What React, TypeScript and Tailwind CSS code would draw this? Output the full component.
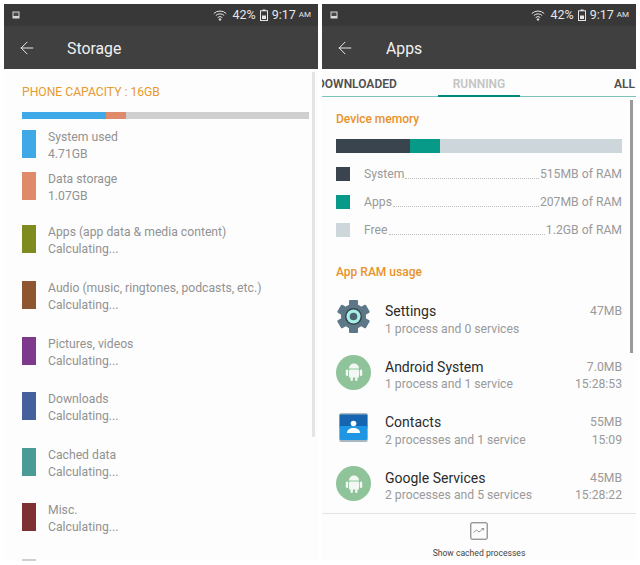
import { ArrowLeft } from "lucide-react";

const storageRows = [
  { name: "System used", value: "4.71GB", color: "bg-[#3fa9e8]", gap: "mt-0" },
  { name: "Data storage", value: "1.07GB", color: "bg-[#e08a6c]", gap: "mt-[14px]" },
  { name: "Apps (app data & media content)", value: "Calculating...", color: "bg-[#7f8a1f]", gap: "mt-[25px]" },
  { name: "Audio (music, ringtones, podcasts, etc.)", value: "Calculating...", color: "bg-[#8f5430]", gap: "mt-[28px]" },
  { name: "Pictures, videos", value: "Calculating...", color: "bg-[#7d3a8c]", gap: "mt-[28px]" },
  { name: "Downloads", value: "Calculating...", color: "bg-[#45609c]", gap: "mt-[27px]" },
  { name: "Cached data", value: "Calculating...", color: "bg-[#4a9a96]", gap: "mt-[28px]" },
  { name: "Misc.", value: "Calculating...", color: "bg-[#7f3033]", gap: "mt-[27px]" },
];

const memoryRows = [
  { name: "System", value: "515MB of RAM", color: "bg-[#3a444e]" },
  { name: "Apps", value: "207MB of RAM", color: "bg-[#079a89]" },
  { name: "Free", value: "1.2GB of RAM", color: "bg-[#cdd6db]" },
];

function AndroidIcon() {
  return (
    <div className="flex h-[35px] w-[35px] items-center justify-center rounded-full bg-[#8fc49a]">
      <svg width="20" height="22" viewBox="0 0 20 22" fill="#f4f8f4">
        <path d="M5 7.500a5 5 0 0 1 10 0z" />
        <rect x="5" y="8.500" width="10" height="8" rx="1" />
        <rect x="1.800" y="8.500" width="2.400" height="6.500" rx="1.200" />
        <rect x="15.800" y="8.500" width="2.400" height="6.500" rx="1.200" />
        <rect x="6.500" y="15" width="2.400" height="5" rx="1.200" />
        <rect x="11.100" y="15" width="2.400" height="5" rx="1.200" />
      </svg>
    </div>
  );
}

function SettingsIcon() {
  return (
    <svg width="35" height="35" viewBox="0 0 35 35">
      <g fill="#5d7787">
        <circle cx="17.500" cy="17.500" r="12.500" />
        {[0, 60, 120, 180, 240, 300].map((a) => (
          <rect key={a} x="13" y="1" width="9" height="8" rx="1" transform={`rotate(${a} 17.500 17.500)`} />
        ))}
      </g>
      <circle cx="17.500" cy="17.500" r="8.500" fill="#37474f" />
      <circle cx="17.500" cy="17.500" r="7" fill="#a8efe6" />
      <circle cx="17.500" cy="17.500" r="3.800" fill="#4c6572" />
    </svg>
  );
}

function ContactsIcon() {
  return (
    <svg width="35" height="35" viewBox="0 0 35 35">
      <rect x="3.500" y="3" width="28" height="29" rx="1.500" fill="#a9b8c0" />
      <rect x="3.500" y="4.500" width="28" height="13" fill="#1565b0" />
      <rect x="3.500" y="16" width="28" height="14" rx="1" fill="#1e96e4" />
      <circle cx="17.500" cy="13.500" r="2.800" fill="#fff" />
      <path d="M11 23c0-3.500 3-5 6.500-5s6.500 1.500 6.500 5z" fill="#fff" />
    </svg>
  );
}

const apps = [
  { name: "Settings", sub: "1 process and 0 services", size: "47MB", time: "", icon: <SettingsIcon /> },
  { name: "Android System", sub: "1 process and 1 service", size: "7.0MB", time: "15:28:53", icon: <AndroidIcon /> },
  { name: "Contacts", sub: "2 processes and 1 service", size: "55MB", time: "15:09", icon: <ContactsIcon /> },
  { name: "Google Services", sub: "2 processes and 5 services", size: "45MB", time: "15:28:22", icon: <AndroidIcon /> },
];

function StatusBar() {
  return (
    <div className="flex h-[22px] items-center justify-between bg-[#383838] pl-[8px] pr-[7px] text-[#e6e6e6]">
      <svg width="8" height="8" viewBox="0 0 8 8">
        <rect x="0.500" y="0.500" width="7" height="7" fill="#d8d8d8" />
        <rect x="1.500" y="1.500" width="5" height="3.500" fill="#484848" />
      </svg>
      <div className="flex items-center text-[12.500px] leading-none">
        <svg width="14" height="11" viewBox="0 0 14 11" fill="none" stroke="#e6e6e6" strokeWidth="1" className="mr-[5px]">
          <path d="M0.800 3.500a9 9 0 0 1 12.400 0" />
          <path d="M2.800 5.500a6.200 6.200 0 0 1 8.400 0" />
          <path d="M4.700 7.500a3.500 3.500 0 0 1 4.600 0" />
          <circle cx="7" cy="9.500" r="0.800" fill="#e6e6e6" />
        </svg>
        <span>42%</span>
        <svg width="8" height="12" viewBox="0 0 8 12" className="mx-[4px]">
          <rect x="2.500" y="0.500" width="3" height="1.500" fill="#e6e6e6" />
          <rect x="0.500" y="1.800" width="7" height="9.700" fill="none" stroke="#e6e6e6" />
          <rect x="2" y="6.500" width="4" height="3.500" fill="#e6e6e6" />
        </svg>
        <span>9:17</span>
        <span className="ml-[3px] text-[8px]">AM</span>
      </div>
    </div>
  );
}

function Toolbar({ title, titleClass }: { title: string; titleClass: string }) {
  return (
    <div className="flex h-[43px] items-center bg-[#404040] text-[#f0f0f0]">
      <ArrowLeft size={20} strokeWidth={1.150} className="ml-[13px]" />
      <span className={`pt-[2px] text-[15.800px] leading-none ${titleClass}`}>{title}</span>
    </div>
  );
}

function StorageScreen() {
  return (
    <section className="relative flex h-[557px] w-[314px] flex-col overflow-hidden bg-[#fdfdfd]">
      <StatusBar />
      <Toolbar title="Storage" titleClass="ml-[30px]" />
      <div className="absolute right-[3px] top-[68px] h-[365px] w-[3px] bg-[#e4e4e4]" />
      <div className="px-[18px] pt-[15px]">
        <p className="text-[12.150px] leading-[16px] text-[#e8992f]">PHONE CAPACITY : 16GB</p>
        <div className="mt-[12px] flex h-[7px] w-[287px] bg-[#cfcfcf]">
          <div className="w-[84px] bg-[#3fa9e8]" />
          <div className="w-[20px] bg-[#e08a6c]" />
        </div>
        <div className="mt-[11px] flex flex-col">
          {storageRows.map((r) => (
            <div key={r.name} className={`flex h-[28px] gap-[12px] ${r.gap}`}>
              <div className={`h-[28px] w-[14px] shrink-0 ${r.color}`} />
              <div className="-mt-[1px] whitespace-nowrap text-[12.200px] leading-[17px] text-[#929292]">
                <div>{r.name}</div>
                <div>{r.value}</div>
              </div>
            </div>
          ))}
          <div className="mt-[28px] h-[2px] w-[14px] shrink-0 bg-[#cfcfcf]" />
        </div>
      </div>
    </section>
  );
}

function AppsScreen() {
  return (
    <section className="relative flex h-[557px] w-[314px] flex-col overflow-hidden bg-[#fdfdfd]">
      <StatusBar />
      <Toolbar title="Apps" titleClass="ml-[31px]" />
      <div className="flex h-[28px] items-center overflow-hidden border-b border-[#7cc4bb] pr-[1px] pt-[3px] text-[12px] font-semibold leading-none">
        <span className="-ml-[5px] w-[79px] shrink-0 text-[#4f4f4f]">DOWNLOADED</span>
        <span className="ml-[42px] w-[82px] shrink-0 text-center text-[#c4c4c4]">RUNNING</span>
        <span className="ml-auto text-[#4f4f4f]">ALL</span>
      </div>
      <div className="absolute left-[116px] top-[91px] h-[2px] w-[82px] bg-[#00897b]" />
      <div className="absolute right-[3px] top-[96px] h-[253px] w-[3px] bg-[#9a9a9a]" />
      <div className="flex-1 px-[14px] pt-[15px]">
        <p className="text-[12px] font-medium leading-[14px] text-[#e8922a]">Device memory</p>
        <div className="mt-[13px] flex h-[14px] w-[286px] bg-[#cdd6db]">
          <div className="w-[74px] bg-[#3a444e]" />
          <div className="w-[30px] bg-[#079a89]" />
        </div>
        <div className="mt-[14px] flex flex-col gap-[14px]">
          {memoryRows.map((r) => (
            <div key={r.name} className="flex h-[14px] items-center text-[12.200px] leading-none text-[#9a9a9a]">
              <div className={`mr-[14px] h-[14px] w-[14px] shrink-0 ${r.color}`} />
              <span className="pt-[1px]">{r.name}</span>
              <span className="mx-[1px] mt-[8px] flex-1 border-b border-dotted border-[#bdbdbd]" />
              <span className="pt-[1px]">{r.value}</span>
            </div>
          ))}
        </div>
        <p className="mt-[28px] text-[12px] font-medium leading-[14px] text-[#e8922a]">App RAM usage</p>
        <div className="mt-[10px] flex flex-col">
          {apps.map((a) => (
            <div key={a.name} className="flex h-[55.600px] items-center">
              <div className="w-[35px] shrink-0">{a.icon}</div>
              <div className="ml-[14px] flex-1 whitespace-nowrap pt-[7px]">
                <div className="text-[14px] leading-[17px] text-[#2b2b2b]">{a.name}</div>
                <div className="mt-[0.500px] text-[12.200px] leading-[17px] text-[#9a9a9a]">{a.sub}</div>
              </div>
              <div className="self-start pt-[14px] text-right text-[12.200px] leading-[17px] text-[#9a9a9a]">
                <div>{a.size}</div>
                {a.time && <div className="mt-[0.500px]">{a.time}</div>}
              </div>
            </div>
          ))}
        </div>
      </div>
      <div className="flex h-[48px] flex-col items-center border-t border-[#e4e4e4] pt-[8px]">
        <svg width="18" height="18" viewBox="0 0 18 18" fill="none" stroke="#6e6e6e">
          <rect x="0.800" y="0.800" width="16.400" height="16.400" rx="1" strokeWidth="1" />
          <path d="M3.500 10.500l3-2.500 2.500 2 4.500-3.500M11.500 6.500h2.200v2" strokeWidth="0.700" />
        </svg>
        <span className="mt-[8px] text-[8.600px] leading-[11px] text-[#444]">Show cached processes</span>
      </div>
    </section>
  );
}

export default function App() {
  return (
    <div className="flex h-[565px] w-[640px] gap-[4px] overflow-hidden bg-white p-[4px] font-['Roboto',sans-serif]">
      <StorageScreen />
      <AppsScreen />
    </div>
  );
}
